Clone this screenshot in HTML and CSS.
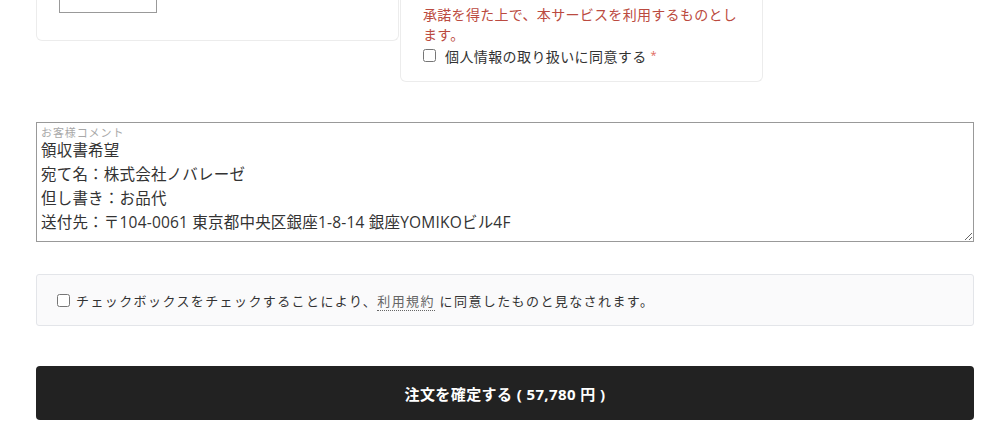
FILE: index.html
```html
<!DOCTYPE html>
<html lang="ja">
<head>
  <meta charset="UTF-8" />
  <meta name="viewport" content="width=device-width, initial-scale=1.0"/>
  <title>ご注文内容の確認</title>
  <link rel="stylesheet" href="styles.css">
</head>
<body>
  <div class="page">
    <div class="cards">
      <div class="card card-left">
        <div class="mini-box"></div>
      </div>
      <div class="card card-right">
        <p class="notice">承諾を得た上で、本サービスを利用するものとします。</p>
        <label class="agree">
          <input type="checkbox">
          <span>個人情報の取り扱いに同意する</span>
          <span class="req">*</span>
        </label>
      </div>
    </div>

    <div class="comment">
      <span class="comment-label">お客様コメント</span>
      <textarea class="comment-text">領収書希望
宛て名：株式会社ノバレーゼ
但し書き：お品代
送付先：〒104-0061 東京都中央区銀座1-8-14 銀座YOMIKOビル4F</textarea>
    </div>

    <div class="terms">
      <input type="checkbox" id="terms">
      <label for="terms">チェックボックスをチェックすることにより、<a href="#" class="terms-link">利用規約</a> に同意したものと見なされます。</label>
    </div>

    <button class="submit">注文を確定する ( 57,780 円 )</button>
  </div>
</body>
</html>
```

FILE: styles.css
```css
* {
  box-sizing: border-box;
}

body {
  margin: 0;
  font-family: "Open Sans", "Noto Sans CJK JP", sans-serif;
  background: #fff;
  color: #333;
}

.page {
  margin-left: 36px;
  width: 938px;
}

/* top row, cropped at the top of the view */
.cards {
  display: flex;
  gap: 1px;
  align-items: flex-start;
}

.card {
  width: 363px;
  border: 1px solid #ececec;
  border-top: 0;
  border-radius: 0 0 6px 6px;
  padding: 0 22px;
}

.card-left {
  height: 41px;
}

.mini-box {
  width: 98px;
  height: 13px;
  border: 1px solid #999;
  border-top: 0;
}

.card-right {
  padding: 5px 22px 15px;
}

.notice {
  margin: 0;
  font-size: 14px;
  line-height: 20px;
  letter-spacing: 0.3px;
  color: #bb4a40;
}

.agree {
  display: flex;
  align-items: center;
  height: 21px;
  font-size: 14px;
  letter-spacing: 0.4px;
  color: #333;
}

.agree input {
  margin: 0 9px 0 0;
  width: 13px;
  height: 13px;
}

.req {
  color: #e0675a;
  font-size: 11px;
  margin-left: 4px;
  align-self: flex-start;
  margin-top: 2px;
}

/* comment textarea with floating label */
.comment {
  position: relative;
  margin-top: 40px;
}

.comment-label {
  position: absolute;
  top: 4px;
  left: 5px;
  font-size: 11px;
  line-height: 13px;
  letter-spacing: 0.9px;
  color: #a8a8a8;
}

.comment-text {
  display: block;
  width: 100%;
  height: 120px;
  margin: 0;
  padding: 15px 4px 4px;
  border: 1px solid #999;
  border-radius: 0;
  font-family: "Open Sans", "Noto Sans CJK JP", sans-serif;
  font-size: 15.5px;
  line-height: 24px;
  letter-spacing: 0.2px;
  color: #333;
  resize: vertical;
}

/* terms of use */
.terms {
  display: flex;
  align-items: center;
  height: 52px;
  margin-top: 32px;
  padding: 0 20px;
  background: #fafafb;
  border: 1px solid #e3e5e9;
  border-radius: 3px;
  font-size: 13px;
  letter-spacing: 1.4px;
  color: #333;
}

.terms input {
  margin: 0 6px 0 0;
  width: 13px;
  height: 13px;
}

.terms-link {
  color: #666;
  text-decoration: none;
  border-bottom: 1px dotted #666;
}

/* submit */
.submit {
  display: block;
  width: 100%;
  height: 54px;
  margin-top: 40px;
  border: 0;
  border-radius: 4px;
  background: #222;
  color: #fff;
  font-family: "Open Sans", "Noto Sans CJK JP", sans-serif;
  font-size: 15px;
  font-weight: bold;
  letter-spacing: 0.4px;
  cursor: pointer;
}
```
